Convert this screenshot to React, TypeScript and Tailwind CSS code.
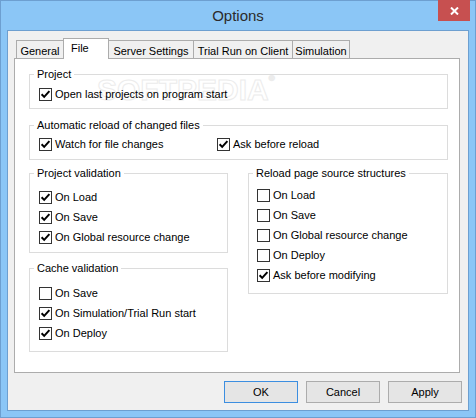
import React from 'react';

const CheckBox: React.FC<{ checked?: boolean }> = ({ checked }) => (
  <span className="w-[13px] h-[13px] border border-[#333333] bg-white flex items-center justify-center shrink-0">
    {checked && (
      <svg width="11" height="11" viewBox="0 0 11 11">
        <path d="M1.6 5.2 L4.2 7.9 L9.4 2.2" fill="none" stroke="#000" strokeWidth="2" />
      </svg>
    )}
  </span>
);

const Row: React.FC<{ label: string; checked?: boolean; className?: string }> = ({ label, checked, className = '' }) => (
  <div className={`relative flex items-center h-[13px] gap-[3px] ${className}`}>
    <CheckBox checked={checked} />
    <span className="leading-[13px] whitespace-nowrap">{label}</span>
  </div>
);

const Group: React.FC<{ title: string; className: string; children: React.ReactNode }> = ({ title, className, children }) => (
  <div className={`relative border border-[#dcdcdc] ${className}`}>
    <span className="absolute left-[4px] top-[-7px] bg-white px-[3px] leading-[13px] whitespace-nowrap">{title}</span>
    {children}
  </div>
);

const App: React.FC = () => {
  return (
    <div className="w-[476px] h-[418px] bg-[#8bc6f6] border border-[#6d9fd0] flex flex-col font-['Liberation_Sans',Arial,sans-serif] text-[11px] text-black select-none">
      {/* title bar */}
      <div className="relative h-[29px] flex items-center justify-center">
        <span className="text-[15px] leading-[18px] text-[#2b2b2b]">Options</span>
        <div className="absolute top-[-1px] right-[5px] w-[32px] h-[21px] bg-[#c75050] flex items-center justify-center">
          <svg width="9" height="8" viewBox="0 0 9 8">
            <path d="M1 0.5 L8 7.5 M8 0.5 L1 7.5" stroke="#fff" strokeWidth="2" />
          </svg>
        </div>
      </div>

      {/* client area */}
      <div className="mx-[6px] h-[381px] bg-[#f0f0f0] border border-[#6d9fd0] flex flex-col">
        {/* tabs */}
        <div className="flex items-end h-[20px] ml-[8px] mt-[7px] relative z-10">
          <div className="w-[48px] h-[18px] border border-b-0 border-[#acacac] bg-[#f0f0f0] flex justify-center pt-[4px] leading-[13px]">General</div>
          <div className="w-[46px] h-[21px] ml-[-1px] mb-[-1px] border border-b-0 border-[#acacac] bg-white pl-[7px] pt-[3px] leading-[13px]">File</div>
          <div className="w-[86px] h-[18px] ml-[-1px] border border-b-0 border-[#acacac] bg-[#f0f0f0] flex justify-center pt-[4px] leading-[13px]">Server Settings</div>
          <div className="w-[100px] h-[18px] ml-[-1px] border border-b-0 border-[#acacac] bg-[#f0f0f0] flex justify-center pt-[4px] leading-[13px]">Trial Run on Client</div>
          <div className="w-[58px] h-[18px] ml-[-1px] border border-b-0 border-[#acacac] bg-[#f0f0f0] flex justify-center pt-[4px] leading-[13px]">Simulation</div>
        </div>

        {/* panel */}
        <div className="relative ml-[6px] mr-[8px] h-[315px] bg-white border border-[#acacac] pt-[15px] pl-[14px] pr-[11px]">
          {/* faint watermark */}
          <div className="absolute left-[82px] top-[16px] text-[30px] leading-[30px] font-bold text-white [-webkit-text-stroke:1px_#ececec] pointer-events-none">
            SOFTPEDIA<span className="text-[8px] leading-[8px] align-top">®</span>
          </div>

          <Group title="Project" className="pt-[13px] pb-[7px] pl-[9px]">
            <Row label="Open last projects on program start" checked />
          </Group>

          <Group title="Automatic reload of changed files" className="mt-[16px] pt-[12px] pb-[8px] pl-[9px] flex">
            <Row label="Watch for file changes" checked className="w-[178px]" />
            <Row label="Ask before reload" checked />
          </Group>

          <div className="mt-[13px] flex items-start gap-[20px]">
            <div className="w-[199px] flex flex-col gap-[15px]">
              <Group title="Project validation" className="pt-[17px] pb-[8px] pl-[9px] flex flex-col gap-[7px]">
                <Row label="On Load" checked />
                <Row label="On Save" checked />
                <Row label="On Global resource change" checked />
              </Group>
              <Group title="Cache validation" className="pt-[18px] pb-[11px] pl-[9px] flex flex-col gap-[7px]">
                <Row label="On Save" />
                <Row label="On Simulation/Trial Run start" checked />
                <Row label="On Deploy" checked />
              </Group>
            </div>
            <Group title="Reload page source structures" className="w-[200px] pt-[15px] pb-[11px] pl-[8px] flex flex-col gap-[7px]">
              <Row label="On Load" />
              <Row label="On Save" />
              <Row label="On Global resource change" />
              <Row label="On Deploy" />
              <Row label="Ask before modifying" checked />
            </Group>
          </div>
        </div>

        {/* buttons */}
        <div className="mt-[8px] flex justify-end gap-[8px] pr-[6px]">
          <button className="w-[74px] h-[22px] border border-[#3c8ee0] bg-[#e5e5e5] leading-[13px]">OK</button>
          <button className="w-[74px] h-[22px] border border-[#acacac] bg-[#e5e5e5] leading-[13px]">Cancel</button>
          <button className="w-[74px] h-[22px] border border-[#acacac] bg-[#e5e5e5] leading-[13px]">Apply</button>
        </div>
      </div>
    </div>
  );
};

export default App;
